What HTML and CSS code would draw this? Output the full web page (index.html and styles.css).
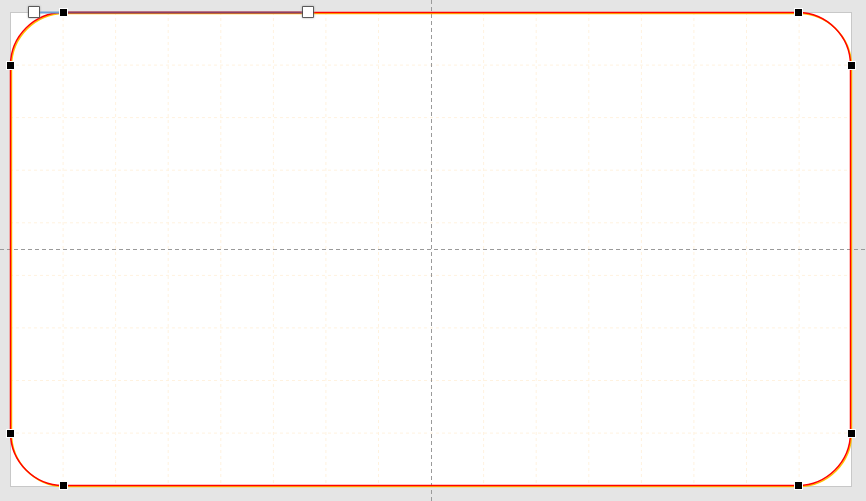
FILE: index.html
```html
<!DOCTYPE html>
<html lang="en">
<head>
  <meta charset="UTF-8">
  <title>Shape editor</title>
  <link rel="stylesheet" href="styles.css">
</head>
<body>
<svg class="stage" width="866" height="501" viewBox="0 0 866 501">
  <!-- drawing area -->
  <rect class="paper" x="10.5" y="12.5" width="841" height="474"/>

  <!-- grid -->
  <g class="grid">
    <line x1="63.1" y1="12" x2="63.1" y2="486"/>
    <line x1="115.6" y1="12" x2="115.6" y2="486"/>
    <line x1="168.2" y1="12" x2="168.2" y2="486"/>
    <line x1="220.8" y1="12" x2="220.8" y2="486"/>
    <line x1="273.4" y1="12" x2="273.4" y2="486"/>
    <line x1="325.9" y1="12" x2="325.9" y2="486"/>
    <line x1="378.5" y1="12" x2="378.5" y2="486"/>
    <line x1="483.6" y1="12" x2="483.6" y2="486"/>
    <line x1="536.2" y1="12" x2="536.2" y2="486"/>
    <line x1="588.8" y1="12" x2="588.8" y2="486"/>
    <line x1="641.4" y1="12" x2="641.4" y2="486"/>
    <line x1="693.9" y1="12" x2="693.9" y2="486"/>
    <line x1="746.5" y1="12" x2="746.5" y2="486"/>
    <line x1="799.1" y1="12" x2="799.1" y2="486"/>

    <line x1="10" y1="65.1" x2="851" y2="65.1"/>
    <line x1="10" y1="117.6" x2="851" y2="117.6"/>
    <line x1="10" y1="170.2" x2="851" y2="170.2"/>
    <line x1="10" y1="222.8" x2="851" y2="222.8"/>
    <line x1="10" y1="275.4" x2="851" y2="275.4"/>
    <line x1="10" y1="327.9" x2="851" y2="327.9"/>
    <line x1="10" y1="380.5" x2="851" y2="380.5"/>
    <line x1="10" y1="433.1" x2="851" y2="433.1"/>
  </g>

  <!-- centre guides -->
  <g class="guide">
    <line x1="431.5" y1="0" x2="431.5" y2="501"/>
    <line x1="0" y1="249.5" x2="866" y2="249.5"/>
  </g>

  <!-- the shape: shadow copy, then the outline -->
  <path class="shape-shadow" d="M63 12.5 H798 A53 53 0 0 1 850.5 65 V433 A53 53 0 0 1 798 485.5 H63 A53 53 0 0 1 10.5 433 V65 A53 53 0 0 1 63 12.5 Z"/>
  <path class="shape" d="M63 12.5 H798 A53 53 0 0 1 850.5 65 V433 A53 53 0 0 1 798 485.5 H63 A53 53 0 0 1 10.5 433 V65 A53 53 0 0 1 63 12.5 Z"/>

  <!-- control handle arms -->
  <line class="arm-in" x1="34" y1="12.5" x2="63" y2="12.5"/>
  <line class="arm-out" x1="63" y1="12.5" x2="308" y2="12.5"/>

  <!-- anchor points -->
  <g class="anchor">
    <rect x="59.5" y="8.5" width="8" height="8"/>
    <rect x="794.5" y="8.5" width="8" height="8"/>
    <rect x="6.5" y="61.5" width="8" height="8"/>
    <rect x="847.5" y="61.5" width="8" height="8"/>
    <rect x="6.5" y="429.5" width="8" height="8"/>
    <rect x="847.5" y="429.5" width="8" height="8"/>
    <rect x="59.5" y="481.5" width="8" height="8"/>
    <rect x="794.5" y="481.5" width="8" height="8"/>
  </g>

  <!-- bezier control points -->
  <g class="ctrl">
    <rect x="29" y="7" width="10" height="10"/>
    <rect x="303" y="7" width="10" height="10"/>
  </g>
</svg>
</body>
</html>
```

FILE: styles.css
```css
* {
  margin: 0;
  padding: 0;
}

body {
  background: #e5e5e5;
  width: 866px;
  height: 501px;
  overflow: hidden;
}

.stage {
  display: block;
}

.paper {
  fill: #fff;
  stroke: #c8c8c8;
  stroke-width: 1;
}

.grid line {
  stroke: #fff2df;
  stroke-width: 1;
  stroke-dasharray: 3 3;
}

.guide line {
  stroke: #9a9a9a;
  stroke-width: 1;
  stroke-dasharray: 4 3;
}

.shape-shadow {
  fill: none;
  stroke: #ffc400;
  stroke-width: 1.5;
  transform: translate(1px, 1px);
}

.shape {
  fill: none;
  stroke: #ff0000;
  stroke-width: 1.5;
}

.arm-in {
  stroke: #6f9fd3;
  stroke-width: 2;
}

.arm-out {
  stroke: #8a3f63;
  stroke-width: 2;
}

.anchor rect {
  fill: #000;
  stroke: #fff;
  stroke-width: 1;
}

.ctrl rect {
  fill: #fff;
  stroke: #3a3a3a;
  stroke-width: 1.5;
  paint-order: stroke;
  filter: drop-shadow(0 0 1px #999);
}
```
